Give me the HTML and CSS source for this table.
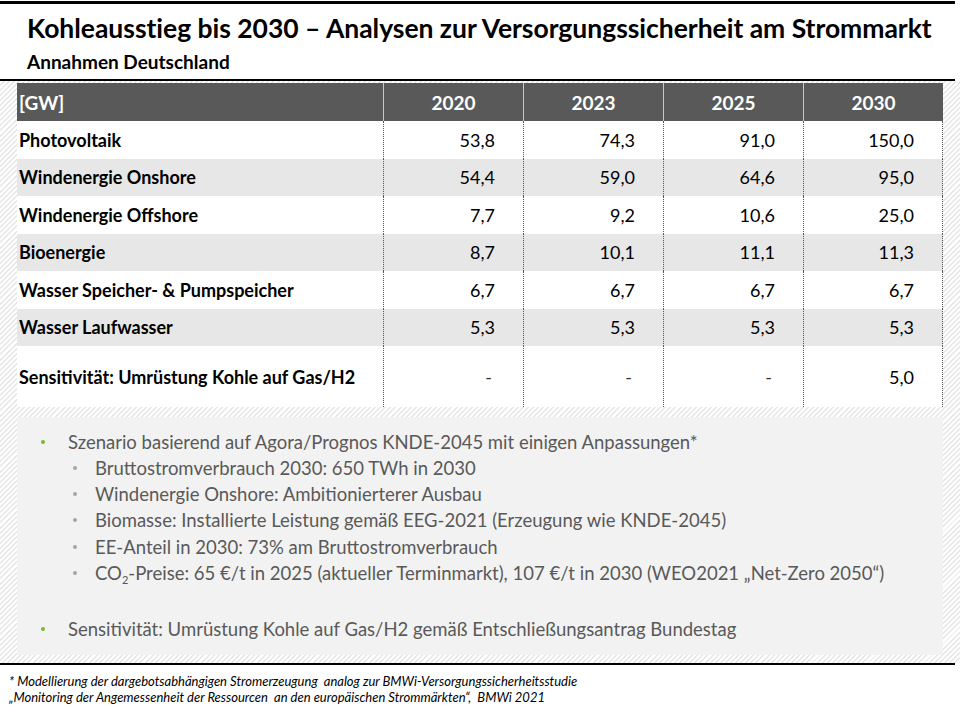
FILE: index.html
```html
<!DOCTYPE html>
<html lang="de">
<head>
<meta charset="utf-8">
<title>Kohleausstieg bis 2030</title>
<link rel="stylesheet" href="styles.css">
</head>
<body>
<div class="slide">
  <div class="topline"></div>
  <header class="head">
    <h1 class="title">Kohleausstieg bis 2030 – Analysen zur Versorgungssicherheit am Strommarkt</h1>
    <h2 class="subtitle">Annahmen Deutschland</h2>
  </header>
  <div class="rule"></div>
  <main class="hatch">
    <table class="data">
      <colgroup>
        <col class="c-label"><col class="c-val"><col class="c-val"><col class="c-val"><col class="c-val">
      </colgroup>
      <thead>
        <tr><th class="lab">[GW]</th><th>2020</th><th>2023</th><th>2025</th><th>2030</th></tr>
      </thead>
      <tbody>
        <tr><td class="lab">Photovoltaik</td><td>53,8</td><td>74,3</td><td>91,0</td><td>150,0</td></tr>
        <tr class="alt"><td class="lab">Windenergie Onshore</td><td>54,4</td><td>59,0</td><td>64,6</td><td>95,0</td></tr>
        <tr><td class="lab">Windenergie Offshore</td><td>7,7</td><td>9,2</td><td>10,6</td><td>25,0</td></tr>
        <tr class="alt"><td class="lab">Bioenergie</td><td>8,7</td><td>10,1</td><td>11,1</td><td>11,3</td></tr>
        <tr><td class="lab">Wasser Speicher- &amp; Pumpspeicher</td><td>6,7</td><td>6,7</td><td>6,7</td><td>6,7</td></tr>
        <tr class="alt"><td class="lab">Wasser Laufwasser</td><td>5,3</td><td>5,3</td><td>5,3</td><td>5,3</td></tr>
        <tr class="tall"><td class="lab">Sensitivität: Umrüstung Kohle auf Gas/H2</td><td class="dash">-</td><td class="dash">-</td><td class="dash">-</td><td>5,0</td></tr>
      </tbody>
    </table>
    <section class="notes">
      <ul class="l1">
        <li>Szenario basierend auf Agora/Prognos KNDE-2045 mit einigen Anpassungen*
          <ul class="l2">
            <li>Bruttostromverbrauch 2030: 650 TWh in 2030</li>
            <li>Windenergie Onshore: Ambitionierterer Ausbau</li>
            <li>Biomasse: Installierte Leistung gemäß EEG-2021 (Erzeugung wie KNDE-2045)</li>
            <li>EE-Anteil in 2030: 73% am Bruttostromverbrauch</li>
            <li>CO<sub>2</sub>-Preise: 65 €/t in 2025 (aktueller Terminmarkt), 107 €/t in 2030 (WEO2021 „Net-Zero 2050“)</li>
          </ul>
        </li>
        <li class="gap">Sensitivität: Umrüstung Kohle auf Gas/H2 gemäß Entschließungsantrag Bundestag</li>
      </ul>
    </section>
  </main>
  <div class="rule"></div>
  <footer class="foot">
    <p>* Modellierung der dargebotsabhängigen Stromerzeugung&nbsp; analog zur BMWi-Versorgungssicherheitsstudie</p>
    <p>„Monitoring der Angemessenheit der Ressourcen&nbsp; an den europäischen Strommärkten“,&nbsp; BMWi 2021</p>
  </footer>
</div>
</body>
</html>
```

FILE: styles.css
```css
* { box-sizing: border-box; }
html, body { margin: 0; padding: 0; background: #ffffff; }
body { font-family: Lato, "Open Sans", sans-serif; color: #000; }
.slide { width: 960px; height: 720px; position: relative; overflow: hidden; }

.topline { height: 3px; background: #000; margin: 1px 5px 0 0; }

.head { padding: 8px 0 0 27px; height: 75px; }
.title { margin: 0; font-size: 26.5px; font-weight: 700; line-height: 32px; letter-spacing: -0.03px; color: #000; white-space: nowrap; }
.subtitle { margin: 7px 0 0 0; font-size: 19px; font-weight: 700; line-height: 22px; color: #000; }

.rule { height: 2px; background: #000; margin-right: 5px; }

.hatch {
  height: 582px;
  padding: 2px 17px 0 17px;
  background: repeating-linear-gradient(135deg, #ffffff 0, #ffffff 2.2px, #e6e6e6 2.2px, #e6e6e6 3.6px);
}

.data { border-collapse: separate; border-spacing: 0; table-layout: fixed; width: 926px; background: #fff; }
.c-label { width: 366px; }
.c-val { width: 140px; }
.data th { background: #595959; color: #fff; font-weight: 700; font-size: 19px; height: 38px; padding: 0; text-align: center; border-left: 1px solid #c8c8c8; }
.data th.lab { text-align: left; padding-left: 2px; border-left: none; }
.data td { height: 37.5px; padding: 0 28px 0 0; text-align: right; font-size: 18px; border-left: 1px dotted #555; color: #000; }
.data td:last-child { border-right: 1px dotted #555; }
.data td.lab { text-align: left; padding: 0 0 0 2px; font-weight: 700; font-size: 18px; border-left: none; white-space: nowrap; }
.data tr.alt td { background: #e7e7e7; }
.data tr.tall td { height: 61px; }
.data td.dash { padding-right: 31px; color: #333; }

.notes { margin-top: 10px; background: #f2f2f2; height: 238px; padding: 12px 0 0 0; color: #595959; font-size: 18.5px; }
.notes ul { list-style: none; margin: 0; padding: 0; }
.l1 > li { position: relative; padding-left: 51px; line-height: 26px; }
.l1 > li::before { content: ""; position: absolute; left: 24px; top: 11px; width: 4px; height: 4px; border-radius: 50%; background: #7ab929; }
.l2 > li { position: relative; padding-left: 27px; line-height: 26.2px; }
.l2 > li::before { content: ""; position: absolute; left: 5px; top: 11px; width: 4px; height: 4px; border-radius: 50%; background: #a6a6a6; }
.l1 > li.gap { margin-top: 30px; }
.notes sub { font-size: 11px; line-height: 0; vertical-align: -4px; }

.foot { padding: 8px 0 0 9px; font-family: Lato, sans-serif; font-style: italic; font-size: 13px; color: #000; }
.foot p { margin: 0; line-height: 16px; }
```
